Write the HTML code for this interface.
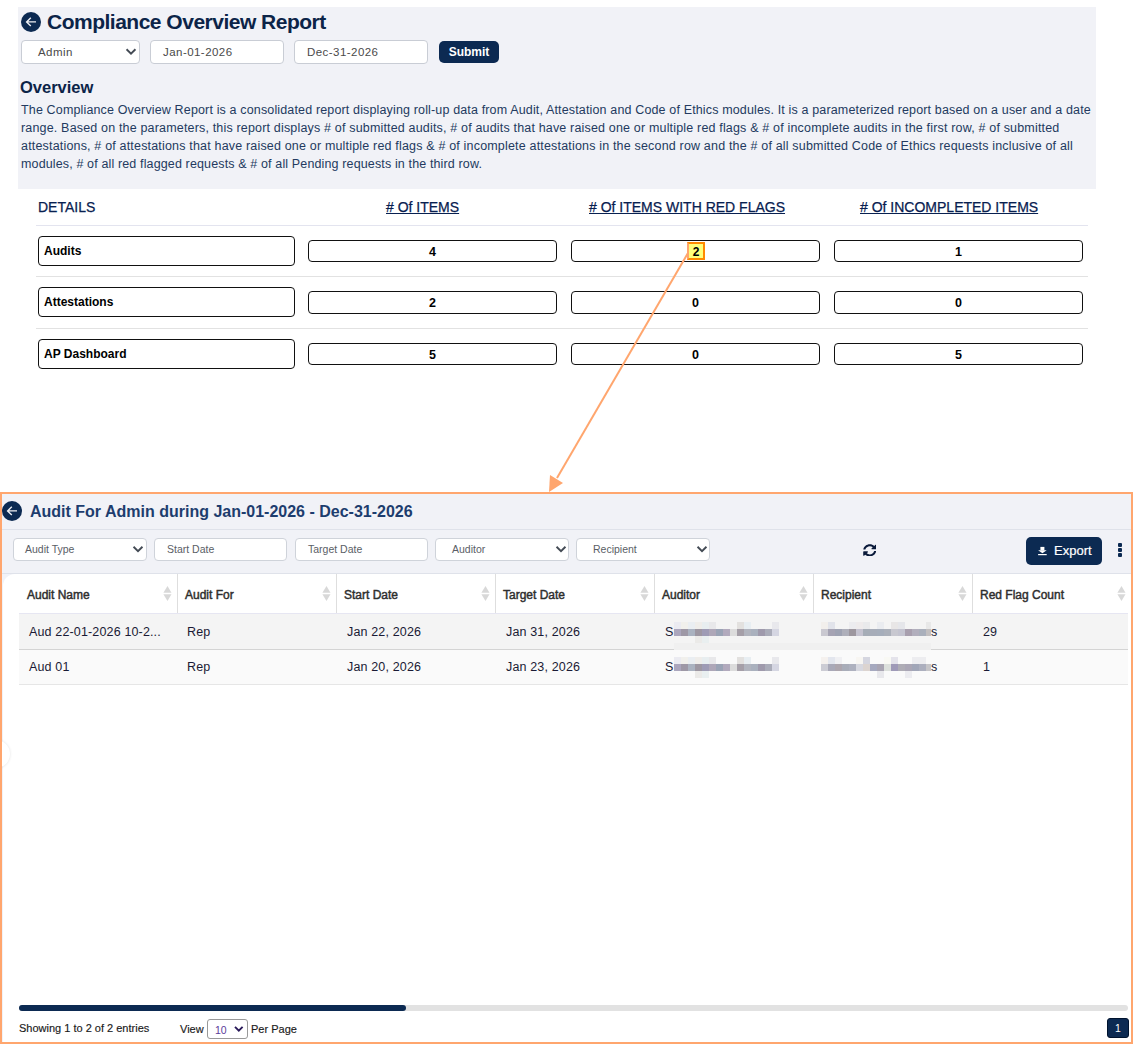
<!DOCTYPE html>
<html><head><meta charset="utf-8">
<style>
*{box-sizing:border-box;margin:0;padding:0}
html,body{width:1134px;height:1045px;overflow:hidden;background:#fff;font-family:"Liberation Sans",sans-serif;position:relative}
.a{position:absolute}
.panel{left:18px;top:7px;width:1078px;height:182px;background:#f1f2f7}
.circ{border-radius:50%;background:#0c2a52}
.title{left:47px;top:10px;font-size:21px;letter-spacing:-0.5px;font-weight:bold;color:#0c2448;white-space:nowrap}
.inp{background:#fff;border:1px solid #c9cdd5;border-radius:4px;font-size:11.5px;color:#4a4a4a;padding-left:12px;line-height:22px;white-space:nowrap;letter-spacing:0.45px}
.btn{background:#0c2a52;color:#fff;border-radius:4px;font-size:12.5px;font-weight:bold;text-align:center}
.ov{left:20px;top:78px;font-size:16.5px;font-weight:bold;color:#0c2448}
.para{left:21px;font-size:12.5px;color:#233a60;white-space:nowrap}
.dhead{font-size:14px;color:#082050;white-space:nowrap;-webkit-text-stroke:0.25px #082050}
.u{text-decoration:underline}
.sep{height:1px;background:#e3e4ef}
.lbox{border:1.5px solid #111;border-radius:4px;background:#fff;font-size:12px;font-weight:bold;color:#000;padding-left:5px}
.vbox{border:1.5px solid #111;border-radius:4px;background:#fff;font-size:12.5px;font-weight:bold;color:#000;text-align:center}
.inp2{background:#fff;border:1px solid #cfd3da;border-radius:4px;font-size:10.5px;color:#5a5e66;line-height:20.5px;white-space:nowrap}
.th{font-size:12px;font-weight:normal;color:#2e2e2e;white-space:nowrap;-webkit-text-stroke:0.45px #2e2e2e}
.td{font-size:12.5px;color:#1a1a35;white-space:nowrap;letter-spacing:0.15px}
</style></head><body>
<div class="a panel"></div>
<div class="a circ" style="left:21px;top:12px;width:20px;height:20px"></div>
<svg class="a" style="left:21px;top:12px" width="20" height="20" viewBox="0 0 20 20"><path d="M9.8 5.8 L5.6 9.9 L9.8 14 M5.8 9.9 H15" stroke="#eef0f4" stroke-width="1.4" fill="none" stroke-linecap="butt" stroke-linejoin="miter"/></svg>
<div class="a title">Compliance Overview Report</div>

<div class="a inp" style="left:21px;top:40px;width:119px;height:24px;padding-left:16px">Admin</div>
<svg class="a" style="left:125px;top:47px" width="12" height="9" viewBox="0 0 12 9"><path d="M1.55 2.3 L6 6.6 L10.45 2.3" stroke="#434a54" stroke-width="1.9" fill="none"/></svg>
<div class="a inp" style="left:150px;top:40px;width:134px;height:24px">Jan-01-2026</div>
<div class="a inp" style="left:294px;top:40px;width:134px;height:24px">Dec-31-2026</div>
<div class="a btn" style="left:439px;top:41px;width:60px;height:22px;line-height:22px;font-size:12px;border-radius:5px">Submit</div>

<div class="a ov">Overview</div>
<div class="a para" style="top:103px;letter-spacing:0.148px">The Compliance Overview Report is a consolidated report displaying roll-up data from Audit, Attestation and Code of Ethics modules. It is a parameterized report based on a user and a date</div>
<div class="a para" style="top:121px;letter-spacing:0.172px">range. Based on the parameters, this report displays # of submitted audits, # of audits that have raised one or multiple red flags &amp; # of incomplete audits in the first row, # of submitted</div>
<div class="a para" style="top:139px;letter-spacing:0.178px">attestations, # of attestations that have raised one or multiple red flags &amp; # of incomplete attestations in the second row and the # of all submitted Code of Ethics requests inclusive of all</div>
<div class="a para" style="top:157px;letter-spacing:0.136px">modules, # of all red flagged requests &amp; # of all Pending requests in the third row.</div>

<div class="a dhead" style="left:38px;top:199px">DETAILS</div>
<div class="a dhead u" style="left:386px;top:199px">#&nbsp;Of ITEMS</div>
<div class="a dhead u" style="left:589px;top:199px">#&nbsp;Of ITEMS WITH RED FLAGS</div>
<div class="a dhead u" style="left:860px;top:199px">#&nbsp;Of INCOMPLETED ITEMS</div>

<div class="a sep" style="left:36px;top:225px;width:1052px"></div>
<div class="a sep" style="left:36px;top:276px;width:1052px;background:#e2e2e2"></div>
<div class="a sep" style="left:36px;top:328px;width:1052px;background:#e2e2e2"></div>

<div class="a lbox" style="left:38px;top:236px;width:257px;height:30px;line-height:29px">Audits</div>
<div class="a vbox" style="left:308px;top:240px;width:249px;height:22px;line-height:23px">4</div>
<div class="a vbox" style="left:571px;top:240px;width:249px;height:22px;line-height:23px"></div>
<div class="a vbox" style="left:834px;top:240px;width:249px;height:22px;line-height:23px">1</div>

<div class="a lbox" style="left:38px;top:287px;width:257px;height:30px;line-height:29px">Attestations</div>
<div class="a vbox" style="left:308px;top:291px;width:249px;height:23px;line-height:23px">2</div>
<div class="a vbox" style="left:571px;top:291px;width:249px;height:23px;line-height:23px">0</div>
<div class="a vbox" style="left:834px;top:291px;width:249px;height:23px;line-height:23px">0</div>

<div class="a lbox" style="left:38px;top:339px;width:257px;height:30px;line-height:29px">AP Dashboard</div>
<div class="a vbox" style="left:308px;top:343px;width:249px;height:22px;line-height:23px">5</div>
<div class="a vbox" style="left:571px;top:343px;width:249px;height:22px;line-height:23px">0</div>
<div class="a vbox" style="left:834px;top:343px;width:249px;height:22px;line-height:23px">5</div>

<div class="a" style="left:687px;top:242px;width:18px;height:18px;background:#ffff7a;border:2px solid #ff8a00;border-left-color:#ffa66e;font-size:12px;font-weight:bold;text-align:center;line-height:17px;color:#000">2</div>

<!-- arrow -->
<svg class="a" style="left:0;top:0" width="1134" height="1045" viewBox="0 0 1134 1045">
<line x1="688" y1="253" x2="557" y2="478" stroke="#ffa66e" stroke-width="2"/>
<polygon points="549,492 550,475 563,483" fill="#ffa66e"/>
</svg>

<!-- bottom panel -->
<div class="a" style="left:0;top:492px;width:1133px;height:552px;border:2px solid #ffa66e;background:#f1f2f7"></div>

<div class="a" style="left:2px;top:529px;width:1129px;height:1px;background:#dfe2ea"></div>
<div class="a" style="left:2px;top:573px;width:1129px;height:1px;background:#dfe2ea"></div>
<div class="a" style="left:3px;top:574px;width:1128px;height:468px;background:#fff;border-top-left-radius:12px"></div>
<div class="a" style="left:-18px;top:740px;width:28px;height:28px;border-radius:50%;background:#fff;box-shadow:0 0 3px rgba(0,0,0,0.12)"></div>
<div class="a circ" style="left:2px;top:501px;width:20px;height:20px"></div>
<svg class="a" style="left:2px;top:501px" width="20" height="20" viewBox="0 0 20 20"><path d="M9.8 5.8 L5.6 9.9 L9.8 14 M5.8 9.9 H15" stroke="#eef0f4" stroke-width="1.4" fill="none" stroke-linecap="butt" stroke-linejoin="miter"/></svg>
<div class="a" style="left:30px;top:503px;font-size:16px;font-weight:bold;color:#1d3d6e;white-space:nowrap">Audit For Admin during Jan-01-2026 - Dec-31-2026</div>

<div class="a inp2" style="left:13px;top:538px;width:134px;height:23px;padding-left:11px">Audit Type</div>
<svg class="a" style="left:132px;top:545px" width="12" height="9" viewBox="0 0 12 9"><path d="M1.55 1.8 L6 6.1 L10.45 1.8" stroke="#434a54" stroke-width="1.9" fill="none"/></svg>
<div class="a inp2" style="left:154px;top:538px;width:133px;height:23px;padding-left:12px">Start Date</div>
<div class="a inp2" style="left:295px;top:538px;width:133px;height:23px;padding-left:12px">Target Date</div>
<div class="a inp2" style="left:435px;top:538px;width:134px;height:23px;padding-left:16px">Auditor</div>
<svg class="a" style="left:555px;top:545px" width="12" height="9" viewBox="0 0 12 9"><path d="M1.55 1.8 L6 6.1 L10.45 1.8" stroke="#434a54" stroke-width="1.9" fill="none"/></svg>
<div class="a inp2" style="left:576px;top:538px;width:134px;height:23px;padding-left:16px">Recipient</div>
<svg class="a" style="left:696px;top:545px" width="12" height="9" viewBox="0 0 12 9"><path d="M1.55 1.8 L6 6.1 L10.45 1.8" stroke="#434a54" stroke-width="1.9" fill="none"/></svg>

<!-- refresh -->
<svg class="a" style="left:862.5px;top:543.6px" width="13.5" height="12.6" viewBox="0 0 512 512" preserveAspectRatio="none"><path fill="#0a1a3a" d="M370.72 133.28C339.458 104.008 298.888 87.962 255.848 88c-77.458.068-144.328 53.178-162.791 126.85-1.344 5.363-6.122 9.150-11.651 9.150H24.103c-7.498 0-13.194-6.807-11.807-14.176C33.933 94.924 134.813 8 256 8c66.448 0 126.791 26.136 171.315 68.685L463.03 40.970C478.149 25.851 504 36.559 504 57.941V192c0 13.255-10.745 24-24 24H345.941c-21.382 0-32.090-25.851-16.971-40.971l41.750-41.749zM32 296h134.059c21.382 0 32.090 25.851 16.971 40.971l-41.750 41.750c31.262 29.273 71.835 45.319 114.876 45.280 77.418-.070 144.315-53.144 162.787-126.849 1.344-5.363 6.122-9.150 11.651-9.150h57.304c7.498 0 13.194 6.807 11.807 14.176C478.067 417.076 377.187 504 256 504c-66.448 0-126.791-26.136-171.315-68.685L48.970 471.030C33.851 486.149 8 475.441 8 454.059V320c0-13.255 10.745-24 24-24z"/></svg>

<div class="a btn" style="left:1026px;top:537px;width:76px;height:28px;border-radius:5px"></div>
<svg class="a" style="left:1037px;top:546px" width="11" height="11" viewBox="0 0 11 11"><rect x="3.4" y="0.9" width="4" height="3.6" fill="#fff"/><polygon points="1.1,4.3 9.7,4.3 5.4,7.2" fill="#fff"/><rect x="1.1" y="8" width="8.6" height="1.2" fill="#fff"/></svg>
<div class="a" style="left:1054px;top:543px;font-size:13px;color:#fff;white-space:nowrap;-webkit-text-stroke:0.2px #fff">Export</div>
<div class="a" style="left:1118px;top:543px;width:4px;height:4px;background:#0c2a52;border-radius:1px"></div>
<div class="a" style="left:1118px;top:548px;width:4px;height:4px;background:#0c2a52;border-radius:1px"></div>
<div class="a" style="left:1118px;top:553px;width:4px;height:4px;background:#0c2a52;border-radius:1px"></div>

<!-- table -->
<div class="a" style="left:19px;top:574px;width:1109px;height:40px;border-bottom:1px solid #e6e6f2"></div>
<div class="a th" style="left:27px;top:588px">Audit Name</div>
<svg class="a" style="left:163px;top:586px" width="9" height="16" viewBox="0 0 9 16"><polygon points="4.5,0 8.5,6.8 0.4,6.8" fill="#d8d8d8"/><polygon points="4.5,15 8.5,8.2 0.4,8.2" fill="#d8d8d8"/></svg>
<div class="a th" style="left:185px;top:588px">Audit For</div>
<svg class="a" style="left:322px;top:586px" width="9" height="16" viewBox="0 0 9 16"><polygon points="4.5,0 8.5,6.8 0.4,6.8" fill="#d8d8d8"/><polygon points="4.5,15 8.5,8.2 0.4,8.2" fill="#d8d8d8"/></svg>
<div class="a" style="left:177px;top:574px;width:1px;height:39px;background:#dedede"></div>
<div class="a th" style="left:344px;top:588px">Start Date</div>
<svg class="a" style="left:481px;top:586px" width="9" height="16" viewBox="0 0 9 16"><polygon points="4.5,0 8.5,6.8 0.4,6.8" fill="#d8d8d8"/><polygon points="4.5,15 8.5,8.2 0.4,8.2" fill="#d8d8d8"/></svg>
<div class="a" style="left:336px;top:574px;width:1px;height:39px;background:#dedede"></div>
<div class="a th" style="left:503px;top:588px">Target Date</div>
<svg class="a" style="left:640px;top:586px" width="9" height="16" viewBox="0 0 9 16"><polygon points="4.5,0 8.5,6.8 0.4,6.8" fill="#d8d8d8"/><polygon points="4.5,15 8.5,8.2 0.4,8.2" fill="#d8d8d8"/></svg>
<div class="a" style="left:495px;top:574px;width:1px;height:39px;background:#dedede"></div>
<div class="a th" style="left:662px;top:588px">Auditor</div>
<svg class="a" style="left:799px;top:586px" width="9" height="16" viewBox="0 0 9 16"><polygon points="4.5,0 8.5,6.8 0.4,6.8" fill="#d8d8d8"/><polygon points="4.5,15 8.5,8.2 0.4,8.2" fill="#d8d8d8"/></svg>
<div class="a" style="left:654px;top:574px;width:1px;height:39px;background:#dedede"></div>
<div class="a th" style="left:821px;top:588px">Recipient</div>
<svg class="a" style="left:958px;top:586px" width="9" height="16" viewBox="0 0 9 16"><polygon points="4.5,0 8.5,6.8 0.4,6.8" fill="#d8d8d8"/><polygon points="4.5,15 8.5,8.2 0.4,8.2" fill="#d8d8d8"/></svg>
<div class="a" style="left:813px;top:574px;width:1px;height:39px;background:#dedede"></div>
<div class="a th" style="left:980px;top:588px">Red Flag Count</div>
<svg class="a" style="left:1117px;top:586px" width="9" height="16" viewBox="0 0 9 16"><polygon points="4.5,0 8.5,6.8 0.4,6.8" fill="#d8d8d8"/><polygon points="4.5,15 8.5,8.2 0.4,8.2" fill="#d8d8d8"/></svg>
<div class="a" style="left:972px;top:574px;width:1px;height:39px;background:#dedede"></div>

<div class="a" style="left:19px;top:614px;width:1109px;height:36px;background:#f4f4f4;border-bottom:1px solid #d4d4d4"></div>
<div class="a" style="left:19px;top:650px;width:1109px;height:35px;background:#fafafa;border-bottom:1px solid #e6e6e6"></div>
<div class="a td" style="left:29px;top:625px">Aud 22-01-2026 10-2...</div>
<div class="a td" style="left:187px;top:625px">Rep</div>
<div class="a td" style="left:347px;top:625px">Jan 22, 2026</div>
<div class="a td" style="left:506px;top:625px">Jan 31, 2026</div>
<div class="a td" style="left:665px;top:625px">S</div>
<div class="a td" style="left:983px;top:625px">29</div>
<div class="a td" style="left:931px;top:625px">s</div>
<div class="a td" style="left:29px;top:660px">Aud 01</div>
<div class="a td" style="left:187px;top:660px">Rep</div>
<div class="a td" style="left:347px;top:660px">Jan 20, 2026</div>
<div class="a td" style="left:506px;top:660px">Jan 23, 2026</div>
<div class="a td" style="left:665px;top:660px">S</div>
<div class="a td" style="left:983px;top:660px">1</div>
<div class="a td" style="left:931px;top:660px">s</div>


<svg class="a" style="left:0;top:0" width="1134" height="1045"><rect x="674" y="643" width="257" height="7" fill="#f0f0f0"/><rect x="674" y="629" width="7" height="7" fill="#aba6bd"/><rect x="674" y="622" width="7" height="7" fill="#ebebf1"/><rect x="681" y="629" width="7" height="7" fill="#9e98a6"/><rect x="681" y="622" width="7" height="7" fill="#f1f0ec"/><rect x="688" y="629" width="7" height="7" fill="#aab2c0"/><rect x="688" y="622" width="7" height="7" fill="#eaeef2"/><rect x="695" y="629" width="7" height="7" fill="#9d97a2"/><rect x="695" y="622" width="7" height="7" fill="#efedea"/><rect x="695" y="636" width="7" height="7" fill="#ebeae8"/><rect x="702" y="629" width="7" height="7" fill="#9e9bb5"/><rect x="702" y="622" width="7" height="7" fill="#e8eef0"/><rect x="702" y="636" width="7" height="7" fill="#e9eff0"/><rect x="709" y="629" width="7" height="7" fill="#aea7b8"/><rect x="709" y="622" width="7" height="7" fill="#e8e8ea"/><rect x="716" y="629" width="7" height="7" fill="#9aa3b5"/><rect x="723" y="629" width="7" height="7" fill="#b2aabd"/><rect x="730" y="629" width="7" height="7" fill="#dcdcdc"/><rect x="737" y="629" width="7" height="7" fill="#a59fa8"/><rect x="737" y="622" width="7" height="7" fill="#e3e1df"/><rect x="744" y="629" width="7" height="7" fill="#b1b4be"/><rect x="744" y="622" width="7" height="7" fill="#e8eef2"/><rect x="751" y="629" width="7" height="7" fill="#aab1be"/><rect x="758" y="629" width="7" height="7" fill="#9f9aac"/><rect x="765" y="629" width="7" height="7" fill="#aaacb9"/><rect x="772" y="629" width="7" height="7" fill="#d5d6e2"/><rect x="772" y="622" width="7" height="7" fill="#e8e8ec"/><rect x="674" y="664" width="7" height="7" fill="#aba6bd"/><rect x="674" y="657" width="7" height="7" fill="#ebebf1"/><rect x="681" y="664" width="7" height="7" fill="#9e98a6"/><rect x="681" y="657" width="7" height="7" fill="#f1f0ec"/><rect x="688" y="664" width="7" height="7" fill="#aab2c0"/><rect x="688" y="657" width="7" height="7" fill="#eaeef2"/><rect x="695" y="664" width="7" height="7" fill="#9d97a2"/><rect x="695" y="657" width="7" height="7" fill="#efedea"/><rect x="695" y="671" width="7" height="7" fill="#ebeae8"/><rect x="702" y="664" width="7" height="7" fill="#9e9bb5"/><rect x="702" y="657" width="7" height="7" fill="#e8eef0"/><rect x="702" y="671" width="7" height="7" fill="#e9eff0"/><rect x="709" y="664" width="7" height="7" fill="#aea7b8"/><rect x="709" y="657" width="7" height="7" fill="#e8e8ea"/><rect x="716" y="664" width="7" height="7" fill="#9aa3b5"/><rect x="723" y="664" width="7" height="7" fill="#b2aabd"/><rect x="730" y="664" width="7" height="7" fill="#dcdcdc"/><rect x="737" y="664" width="7" height="7" fill="#a59fa8"/><rect x="737" y="657" width="7" height="7" fill="#e3e1df"/><rect x="744" y="664" width="7" height="7" fill="#b1b4be"/><rect x="744" y="657" width="7" height="7" fill="#e8eef2"/><rect x="751" y="664" width="7" height="7" fill="#aab1be"/><rect x="758" y="664" width="7" height="7" fill="#9f9aac"/><rect x="765" y="664" width="7" height="7" fill="#aaacb9"/><rect x="772" y="664" width="7" height="7" fill="#d5d6e2"/><rect x="772" y="657" width="7" height="7" fill="#e8e8ec"/><rect x="821" y="629" width="7" height="7" fill="#c9c8d0"/><rect x="821" y="622" width="7" height="7" fill="#f2efec"/><rect x="828" y="629" width="7" height="7" fill="#a5a3b3"/><rect x="828" y="622" width="7" height="7" fill="#e1e3ea"/><rect x="835" y="629" width="7" height="7" fill="#9ea2b2"/><rect x="842" y="629" width="7" height="7" fill="#aeafba"/><rect x="849" y="629" width="7" height="7" fill="#9d979f"/><rect x="849" y="622" width="7" height="7" fill="#ececef"/><rect x="856" y="629" width="7" height="7" fill="#c5c3d0"/><rect x="856" y="622" width="7" height="7" fill="#eeebec"/><rect x="863" y="629" width="7" height="7" fill="#a6adb7"/><rect x="863" y="622" width="7" height="7" fill="#e9eaec"/><rect x="870" y="629" width="7" height="7" fill="#a7adb9"/><rect x="877" y="629" width="7" height="7" fill="#a6aebb"/><rect x="877" y="622" width="7" height="7" fill="#eaecf0"/><rect x="884" y="629" width="7" height="7" fill="#abb0ba"/><rect x="891" y="629" width="7" height="7" fill="#c8c8d0"/><rect x="891" y="622" width="7" height="7" fill="#e8e6e6"/><rect x="898" y="629" width="7" height="7" fill="#c4c4d0"/><rect x="898" y="622" width="7" height="7" fill="#e5e6ea"/><rect x="905" y="629" width="7" height="7" fill="#a89fae"/><rect x="912" y="629" width="7" height="7" fill="#b2afbd"/><rect x="919" y="629" width="7" height="7" fill="#aab0bc"/><rect x="926" y="629" width="5" height="7" fill="#c2bfc0"/><rect x="926" y="622" width="5" height="7" fill="#e8e8e8"/><rect x="821" y="664" width="7" height="7" fill="#ccccd4"/><rect x="821" y="657" width="7" height="7" fill="#f5f1ee"/><rect x="828" y="664" width="7" height="7" fill="#a9a9b8"/><rect x="828" y="657" width="7" height="7" fill="#e3e6ee"/><rect x="835" y="664" width="7" height="7" fill="#ada6ae"/><rect x="835" y="657" width="7" height="7" fill="#f0f0f3"/><rect x="842" y="664" width="7" height="7" fill="#a9adb9"/><rect x="849" y="664" width="7" height="7" fill="#aeb1bf"/><rect x="856" y="664" width="7" height="7" fill="#d7d8e0"/><rect x="856" y="657" width="7" height="7" fill="#f8f6f2"/><rect x="863" y="664" width="7" height="7" fill="#dcd4d0"/><rect x="863" y="657" width="7" height="7" fill="#d5d6e0"/><rect x="870" y="664" width="7" height="7" fill="#a6a9bf"/><rect x="877" y="664" width="7" height="7" fill="#a9a5b3"/><rect x="877" y="671" width="7" height="7" fill="#e8e8ec"/><rect x="884" y="664" width="7" height="7" fill="#dce0dc"/><rect x="884" y="657" width="7" height="7" fill="#f9f9f4"/><rect x="891" y="664" width="7" height="7" fill="#9f9ab8"/><rect x="891" y="657" width="7" height="7" fill="#e4e3eb"/><rect x="898" y="664" width="7" height="7" fill="#aeacb5"/><rect x="905" y="664" width="7" height="7" fill="#aaa6b5"/><rect x="905" y="671" width="7" height="7" fill="#ececf0"/><rect x="912" y="664" width="7" height="7" fill="#a1a6b8"/><rect x="912" y="657" width="7" height="7" fill="#ededf0"/><rect x="919" y="664" width="7" height="7" fill="#acafbe"/><rect x="919" y="657" width="7" height="7" fill="#ededf0"/><rect x="926" y="664" width="5" height="7" fill="#c6c5c8"/></svg>
<!-- footer -->
<div class="a" style="left:19px;top:1005px;width:1109px;height:6px;background:#e2e2e2;border-radius:3px"></div>
<div class="a" style="left:19px;top:1005px;width:387px;height:6px;background:#0c2a52;border-radius:3px"></div>
<div class="a" style="left:19px;top:1022px;font-size:11px;letter-spacing:0px;color:#1a1a1a;white-space:nowrap;-webkit-text-stroke:0.15px #1a1a1a">Showing 1 to 2 of 2 entries</div>
<div class="a" style="left:180px;top:1023px;font-size:11px;color:#1a1a1a;white-space:nowrap;-webkit-text-stroke:0.15px #1a1a1a">View</div>
<div class="a" style="left:207px;top:1019px;width:41px;height:20px;border:1px solid #999;border-radius:3px;background:#fff"></div>
<div class="a" style="left:215px;top:1024px;font-size:10.5px;color:#5a3a9a">10</div>
<svg class="a" style="left:234px;top:1025px" width="10" height="8" viewBox="0 0 10 8"><path d="M1 1.8 L4.8 5.6 L8.6 1.8" stroke="#2a1a5a" stroke-width="1.9" fill="none"/></svg>
<div class="a" style="left:251px;top:1023px;font-size:11px;color:#1a1a1a;white-space:nowrap;-webkit-text-stroke:0.15px #1a1a1a">Per Page</div>
<div class="a btn" style="left:1107px;top:1018px;width:22px;height:20px;line-height:18px;font-size:10.5px;font-weight:normal;border-radius:3px;border:1px solid #00132e">1</div>
<div class="a" style="left:0;top:492px;width:1133px;height:552px;border:2px solid #ffa66e"></div>
</body></html>
